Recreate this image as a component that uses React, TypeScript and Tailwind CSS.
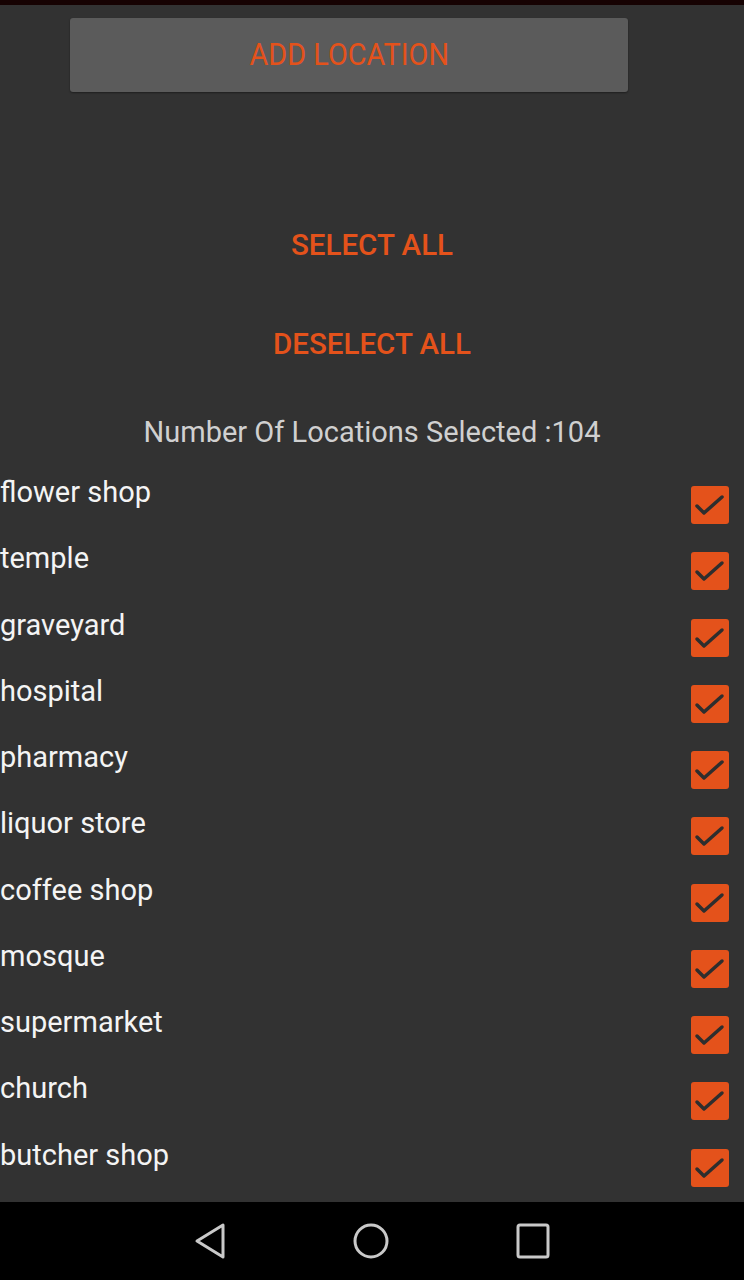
import React from "react";

const locations = [
  "flower shop",
  "temple",
  "graveyard",
  "hospital",
  "pharmacy",
  "liquor store",
  "coffee shop",
  "mosque",
  "supermarket",
  "church",
  "butcher shop",
];

const CheckBox = () => (
  <div className="w-[38px] h-[38px] rounded-[3px] bg-[#e4521b] flex items-center justify-center">
    <svg width="38" height="38" viewBox="0 0 38 38" fill="none">
      <path d="M6 20 L13 27 L31 11" stroke="#2e2e2e" strokeWidth="3.5" strokeLinecap="round" strokeLinejoin="round" />
    </svg>
  </div>
);

const NavBar = () => (
  <div className="h-[78px] bg-black flex items-center justify-center shrink-0">
    <div className="flex items-center gap-[126px]">
      <svg width="32" height="38" viewBox="0 0 32 38" fill="none">
        <path d="M3 19 L29 3 L29 35 Z" stroke="#c9c9c9" strokeWidth="3" strokeLinejoin="round" />
      </svg>
      <svg width="38" height="38" viewBox="0 0 38 38" fill="none">
        <circle cx="19" cy="19" r="16" stroke="#c9c9c9" strokeWidth="3" />
      </svg>
      <svg width="34" height="36" viewBox="0 0 34 36" fill="none">
        <rect x="2" y="2" width="30" height="32" rx="2" stroke="#c9c9c9" strokeWidth="3" />
      </svg>
    </div>
  </div>
);

export default function App() {
  return (
    <div className="w-[744px] h-[1280px] flex flex-col bg-[#323232] overflow-hidden" style={{ fontFamily: "Roboto, 'Liberation Sans', sans-serif" }}>
      <div className="h-[5px] bg-[#160202] shrink-0" />
      <div className="flex-1 flex flex-col overflow-hidden">
        <div className="pt-[13px] pl-[70px]">
          <button className="w-[558px] h-[74px] rounded-[3px] bg-[#5b5b5b] flex items-center justify-center shadow-[0_1px_2px_rgba(0,0,0,0.4)]">
            <span className="inline-block text-[31px] text-[#e4521b] scale-x-[0.93]">ADD LOCATION</span>
          </button>
        </div>
        <div className="mt-[103px] h-[100px] flex items-center justify-center">
          <span className="text-[29.5px] font-medium text-[#e4521b]">SELECT ALL</span>
        </div>
        <div className="h-[99px] flex items-center justify-center">
          <span className="text-[29.5px] font-medium text-[#e4521b]">DESELECT ALL</span>
        </div>
        <div className="h-[78px] flex items-center justify-center">
          <span className="text-[29px] text-[#d0d0d0]">Number Of Locations Selected :104</span>
        </div>
        <div className="flex-1 overflow-hidden">
          {locations.map((name) => (
            <div key={name} className="h-[66.25px] flex items-center justify-between pr-[15px]">
              <span className="self-start leading-[40px] text-[29px] text-[#f4f4f4]">{name}</span>
              <CheckBox />
            </div>
          ))}
        </div>
      </div>
      <NavBar />
    </div>
  );
}
